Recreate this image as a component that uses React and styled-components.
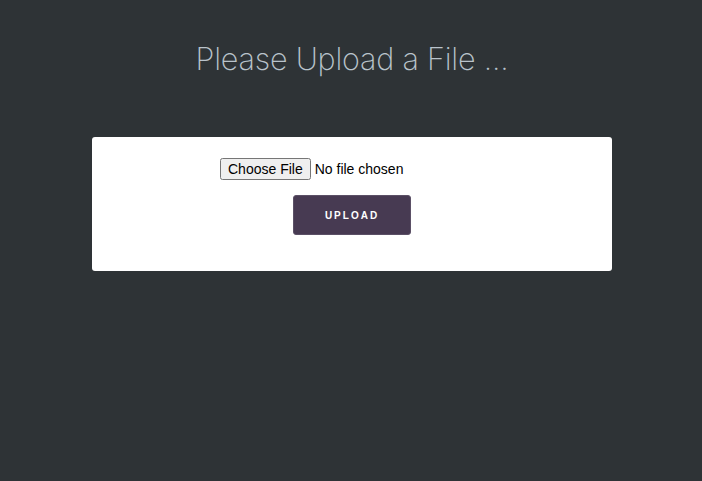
import React from "react";
import styled, { createGlobalStyle } from "styled-components";

const Global = createGlobalStyle`
  html, body { margin: 0; padding: 0; background: #2e3336; }
  body { font-family: "Liberation Sans", Arial, sans-serif; }
`;

const Page = styled.div`
  min-height: 481px;
  display: flex;
  flex-direction: column;
  align-items: center;
  padding-top: 38px;
  padding-left: 2px;
  box-sizing: border-box;
`;

const Title = styled.h1`
  margin: 0;
  font-family: "Inter", "Lato", sans-serif;
  font-weight: 200;
  font-size: 30.5px;
  letter-spacing: -0.2px;
  color: #b9c3cb;
  line-height: 42px;
`;

const Card = styled.form`
  margin-top: 57px;
  width: 520px;
  height: 134px;
  background: #ffffff;
  border-radius: 3px;
  display: flex;
  flex-direction: column;
  align-items: center;
  padding-top: 21px;
  box-sizing: border-box;
`;

const FileInput = styled.input`
  align-self: flex-start;
  margin-left: 128px;
  font-family: "Liberation Sans", Arial, sans-serif;
  font-size: 14px;
  color: #000;
`;

const UploadButton = styled.button`
  margin-top: 15px;
  width: 118px;
  height: 40px;
  background: #473a52;
  color: #ffffff;
  border: 1px solid #5b5066;
  border-radius: 3px;
  font-family: "Liberation Sans", Arial, sans-serif;
  font-weight: 700;
  font-size: 10px;
  letter-spacing: 2px;
  cursor: pointer;
`;

export default function App() {
  return (
    <>
      <Global />
      <Page>
        <Title>Please Upload a File ...</Title>
        <Card onSubmit={(e) => e.preventDefault()}>
          <FileInput type="file" />
          <UploadButton type="submit">UPLOAD</UploadButton>
        </Card>
      </Page>
    </>
  );
}
